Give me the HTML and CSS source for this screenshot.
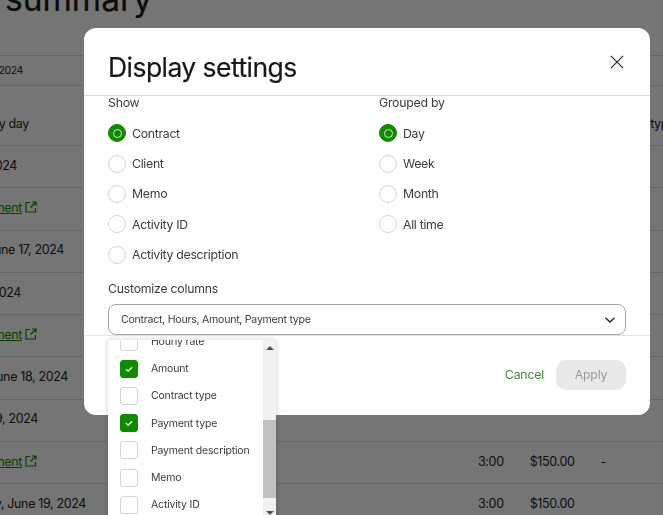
FILE: index.html
```html
<!DOCTYPE html>
<html lang="en">
<head>
<meta charset="utf-8">
<title>Display settings</title>
<link rel="stylesheet" href="styles.css">
</head>
<body>
<main class="page">
  <h1 class="page-title">summary</h1>
  <div class="table">
    <div class="row row-small"><div class="cell end-23 small">Jun 17 - Jun 19, 2024</div></div>
    <div class="row row-head"><div class="cell end-29">Grouped by day</div><div class="type-head">Payment type</div></div>
    <div class="row"><div class="cell end-17">Contract 2024</div></div>
    <div class="row"><div class="cell end-37"><a class="link">Payment</a><svg class="ext" viewBox="0 0 12 12"><path d="M5 1.500H1v9.500h9.500V7M7 1h4v4M11 1 5.500 6.500"/></svg></div></div>
    <div class="row"><div class="cell end-64">Monday, June 17, 2024</div></div>
    <div class="row"><div class="cell end-21">Contract 2024</div></div>
    <div class="row"><div class="cell end-37"><a class="link">Payment</a><svg class="ext" viewBox="0 0 12 12"><path d="M5 1.500H1v9.500h9.500V7M7 1h4v4M11 1 5.500 6.500"/></svg></div></div>
    <div class="row"><div class="cell end-68">Tuesday, June 18, 2024</div></div>
    <div class="row"><div class="cell end-38">June 19, 2024</div></div>
    <div class="row"><div class="cell end-37"><a class="link">Payment</a><svg class="ext" viewBox="0 0 12 12"><path d="M5 1.500H1v9.500h9.500V7M7 1h4v4M11 1 5.500 6.500"/></svg></div><div class="hours">3:00</div><div class="amount">$150.00</div><div class="dash">-</div></div>
    <div class="row"><div class="cell end-86">Wednesday, June 19, 2024</div><div class="hours">3:00</div><div class="amount">$150.00</div></div>
  </div>
</main>

<div class="overlay">
  <section class="modal">
    <header class="modal-head">
      <h2 class="modal-title">Display settings</h2>
      <svg class="close" viewBox="0 0 16 16"><path d="M1 1l14 14M15 1 1 15"/></svg>
    </header>
    <div class="modal-body">
      <div class="columns">
        <div class="group">
          <div class="label">Show</div>
          <div class="option"><span class="radio checked"></span>Contract</div>
          <div class="option"><span class="radio"></span>Client</div>
          <div class="option"><span class="radio"></span>Memo</div>
          <div class="option"><span class="radio"></span>Activity ID</div>
          <div class="option"><span class="radio"></span>Activity description</div>
        </div>
        <div class="group">
          <div class="label">Grouped by</div>
          <div class="option"><span class="radio checked"></span>Day</div>
          <div class="option"><span class="radio"></span>Week</div>
          <div class="option"><span class="radio"></span>Month</div>
          <div class="option"><span class="radio"></span>All time</div>
        </div>
      </div>
      <div class="label custom-label">Customize columns</div>
      <div class="select">
        <span>Contract, Hours, Amount, Payment type</span>
        <svg class="chevron" viewBox="0 0 12 8"><path d="M1.500 1.800 6 6l4.500-4.200"/></svg>
      </div>
    </div>
    <footer class="modal-foot">
      <span class="cancel">Cancel</span>
      <span class="apply">Apply</span>
    </footer>
  </section>

  <div class="dropdown">
    <div class="list">
      <div class="item"><span class="box"></span>Hourly rate</div>
      <div class="item"><span class="box on"><svg viewBox="0 0 18 18"><path d="M5.500 9.300 8 11.500l4.500-4.500"/></svg></span>Amount</div>
      <div class="item"><span class="box"></span>Contract type</div>
      <div class="item"><span class="box on"><svg viewBox="0 0 18 18"><path d="M5.500 9.300 8 11.500l4.500-4.500"/></svg></span>Payment type</div>
      <div class="item"><span class="box"></span>Payment description</div>
      <div class="item"><span class="box"></span>Memo</div>
      <div class="item"><span class="box"></span>Activity ID</div>
    </div>
    <div class="scrollbar">
      <span class="arrow up"></span>
      <span class="thumb"></span>
      <span class="arrow down"></span>
    </div>
  </div>
</div>
</body>
</html>
```

FILE: styles.css
```css
* { box-sizing: border-box; }

html, body {
  margin: 0;
  height: 515px;
  overflow: hidden;
}

body {
  background: #fff;
  color: #222;
  font-family: Inter, "Liberation Sans", sans-serif;
}

/* Page behind the dialog */
.page { height: 515px; overflow: hidden; }

.page-title {
  margin: -26px 0 0 5px;
  height: 81px;
  font-size: 33.500px;
  line-height: 50px;
  font-weight: 400;
  color: #181818;
  -webkit-text-stroke: 0.2px #181818;
}

.table { border-top: 1px solid #ddd; }

.row {
  display: flex;
  align-items: center;
  height: 42.300px;
  padding-bottom: 3px;
  border-bottom: 1px solid #ddd;
  font-size: 12.500px;
  letter-spacing: -0.36px;
  white-space: nowrap;
}

.row-small { height: 30px; padding-bottom: 0; }
.row-head { height: 60px; padding: 16px 0 0; justify-content: space-between; }

.cell {
  display: flex;
  align-items: center;
  justify-content: flex-end;
  gap: 3px;
  flex: none;
}

.small { font-size: 10.500px; }

.end-17 { width: 17px; }
.end-21 { width: 21px; }
.end-23 { width: 23px; }
.end-29 { width: 29px; }
.end-37 { width: 37px; }
.end-38 { width: 38px; }
.end-64 { width: 64px; }
.end-68 { width: 68px; }
.end-86 { width: 86px; }

.type-head { margin-right: -12px; }

.link { color: #108a00; text-decoration: underline; }

.ext {
  flex: none;
  width: 12px;
  height: 12px;
  fill: none;
  stroke: #108a00;
  stroke-width: 1.200;
}

.end-37 + .hours { padding-left: 441px; }
.end-86 + .hours { padding-left: 392px; }
.amount { margin-left: 26px; }
.dash { margin-left: 26px; }

/* Dialog */
.overlay {
  position: fixed;
  inset: 0;
  padding: 28px 13px 0 84px;
  background: rgba(0, 0, 0, 0.54);
}

.modal {
  display: flex;
  flex-direction: column;
  height: 387px;
  background: #fff;
  border-radius: 12px;
  overflow: hidden;
}

.modal-head {
  flex: none;
  display: flex;
  align-items: center;
  justify-content: space-between;
  height: 68px;
  padding: 10px 26px 0 24px;
  border-bottom: 1px solid #d9d9d9;
}

.modal-title {
  margin: 0;
  font-size: 26.500px;
  line-height: 34px;
  font-weight: 400;
  letter-spacing: -0.55px;
  color: #181818;
  -webkit-text-stroke: 0.2px #181818;
}

.close {
  width: 14px;
  height: 14px;
  margin-bottom: 10px;
  fill: none;
  stroke: #222;
  stroke-width: 1.300;
}

.modal-body {
  flex: 1;
  min-height: 0;
  padding: 0 24px;
  overflow: hidden;
}

.columns {
  display: grid;
  grid-template-columns: 271px 1fr;
}

.label {
  height: 13px;
  font-size: 12.300px;
  line-height: 13px;
  letter-spacing: -0.25px;
  color: #3d3d3d;
}

.option {
  display: flex;
  align-items: center;
  gap: 6px;
  height: 30.400px;
  font-size: 12.300px;
  letter-spacing: -0.3px;
  color: #3d3d3d;
}

.label + .option { margin-top: 9px; }

.radio {
  flex: none;
  position: relative;
  width: 18px;
  height: 18px;
  border: 1px solid #d5d5d5;
  border-radius: 50%;
  background: #fff;
}

.radio.checked {
  border-color: #108a00;
  background: #108a00;
}

.radio.checked::after {
  content: "";
  position: absolute;
  inset: 3.500px;
  border: 1px solid #cfe8cb;
  border-radius: 50%;
}

.custom-label { margin-top: 12px; }

.select {
  display: flex;
  align-items: center;
  justify-content: space-between;
  height: 31px;
  margin-top: 9.500px;
  padding: 0 9px 0 12px;
  border: 1px solid #a5a5a5;
  border-radius: 8px;
  font-size: 10.600px;
  letter-spacing: -0.26px;
  color: #3d3d3d;
}

.chevron {
  width: 12px;
  height: 8px;
  fill: none;
  stroke: #222;
  stroke-width: 1.300;
}

.modal-foot {
  flex: none;
  display: flex;
  align-items: center;
  justify-content: flex-end;
  gap: 12px;
  height: 80px;
  padding: 0 24px 2px;
  border-top: 1px solid #e4e4e4;
  font-size: 12.300px;
  letter-spacing: -0.2px;
}

.cancel { color: #3c8a2e; }

.apply {
  display: flex;
  align-items: center;
  justify-content: center;
  width: 70px;
  height: 30px;
  border-radius: 10px;
  background: #e9e9e9;
  color: #9a9a9a;
}

/* Open multi-select list */
.dropdown {
  position: absolute;
  left: 108px;
  top: 340px;
  display: flex;
  width: 168px;
  height: 178px;
  background: #fff;
  box-shadow: 0 0 6px rgba(0, 0, 0, 0.18);
}

.list {
  flex: 1;
  min-width: 0;
  overflow: hidden;
  padding-left: 12px;
}

.item {
  display: flex;
  align-items: center;
  gap: 13px;
  height: 27.200px;
  font-size: 10.500px;
  letter-spacing: -0.18px;
  color: #3d3d3d;
  white-space: nowrap;
}

.item:first-child { margin-top: -12px; }

.box {
  flex: none;
  width: 18px;
  height: 18px;
  border: 1px solid #d5d5d5;
  border-radius: 3px;
}

.box.on {
  border-color: #108a00;
  background: #108a00;
}

.box svg {
  display: block;
  width: 16px;
  height: 16px;
  fill: none;
  stroke: #fff;
  stroke-width: 1.300;
}

.scrollbar {
  flex: none;
  display: flex;
  flex-direction: column;
  align-items: center;
  width: 13px;
  background: #f1f1f1;
}

.arrow {
  flex: none;
  width: 0;
  height: 0;
  border-left: 4px solid transparent;
  border-right: 4px solid transparent;
}

.arrow.up { margin-top: 6px; border-bottom: 4px solid #505050; }
.arrow.down { margin-top: 13px; border-top: 4px solid #505050; }

.thumb {
  flex: none;
  width: 100%;
  height: 78px;
  margin-top: 70px;
  background: #c1c1c1;
}
```
